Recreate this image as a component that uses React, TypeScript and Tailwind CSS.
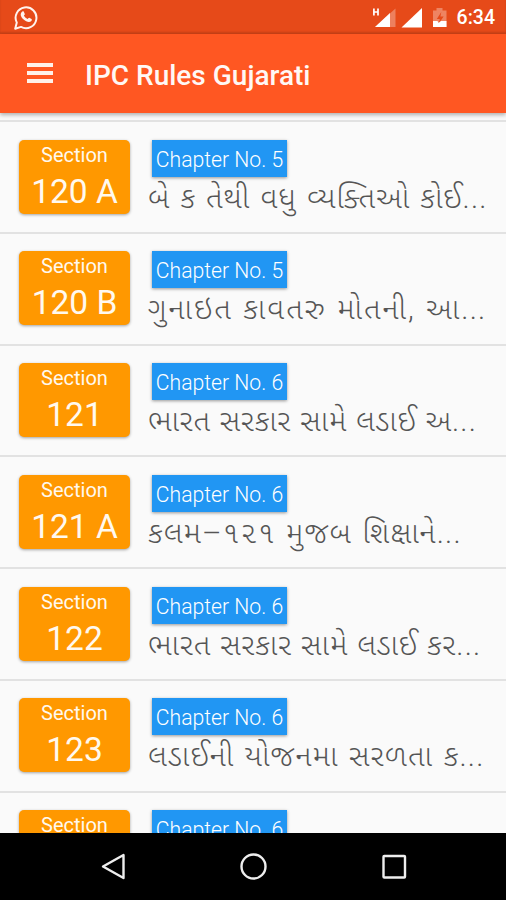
import React from "react";

interface Rule {
  section: string;
  chapter: number;
  title: string;
  spacing: string;
}

const RULES: Rule[] = [
  { section: "120 A", chapter: 5, title: "બે ક તેથી વધુ વ્યક્તિઓ કોઈ", spacing: "tracking-[0.9px] [word-spacing:2px]" },
  { section: "120 B", chapter: 5, title: "ગુનાઇત કાવતરુ મોતની, આ", spacing: "tracking-[2px] [word-spacing:1px]" },
  { section: "121", chapter: 6, title: "ભારત સરકાર સામે લડાઈ અ", spacing: "tracking-[0.7px] [word-spacing:1px]" },
  { section: "121 A", chapter: 6, title: "કલમ–૧૨૧ મુજબ શિક્ષાને", spacing: "tracking-[1.1px] [word-spacing:2px]" },
  { section: "122", chapter: 6, title: "ભારત સરકાર સામે લડાઈ કર", spacing: "tracking-[0.8px] [word-spacing:1px]" },
  { section: "123", chapter: 6, title: "લડાઈની યોજનમા સરળતા ક", spacing: "tracking-[1.15px] [word-spacing:2px]" },
  { section: "124", chapter: 6, title: "", spacing: "tracking-normal" },
];

function StatusBar() {
  return (
    <div className="flex h-[34px] shrink-0 items-center justify-between bg-[#e64a19] shadow-[inset_0_-2px_2px_rgba(0,0,0,0.12)]">
      <svg className="ml-[14px] h-[25px] w-[24px]" viewBox="0 0 24 25" fill="none">
        <path
          d="M1.2 23.8 2.8 17.6A10.4 10.4 0 1 1 7 21.9Z"
          stroke="#fff3ee"
          strokeWidth="2"
          strokeLinejoin="round"
        />
        <path
          d="M8.3 6.6c.5-.5 1.2-.5 1.5.1l1 2.2c.2.5-.8 1.3-.9 1.7.6 1.4 2 2.8 3.6 3.4.5 0 1.2-1.3 1.8-1.2l2.2 1.1c.7.4.3 1.7-.4 2.3-1.3 1.1-3 1-5 0-2.6-1.3-4.6-3.3-5.3-5.6-.3-1.5.3-3.1 1.5-4Z"
          fill="#fff3ee"
        />
      </svg>
      <div className="flex items-center pr-[11px]">
        <svg className="h-[34px] w-[84px]" viewBox="0 0 84 34">
          <path d="M0.9 8.5v7M5 8.5v7M0.5 12H5" stroke="#fff" strokeWidth="1.7" />
          <path d="M2 27 22.5 8.5V27Z" fill="#fff" opacity="0.3" />
          <path d="M2 27 17 13V27Z" fill="#fff" />
          <path d="M28.5 27.5 49 8v19.5Z" fill="#fff" />
          <path d="M60 10.5h3.500V8h6v2.500H73.500V27H60Z" fill="#fff" opacity="0.32" />
          <path d="M68.300 12 63.800 19h3l-1 4.500 4.800-7h-3.200Z" fill="#e64a19" />
          <path d="M60 21h4.500l1 2 2.500-2h5.500v6H60Z" fill="#fff" />
        </svg>
        <span className="pt-[2px] text-[19.5px] font-medium leading-[34px] text-white">6:34</span>
      </div>
    </div>
  );
}

function AppBar() {
  return (
    <header className="relative z-10 flex h-[79px] shrink-0 items-center bg-[#ff5722] pl-[27px] shadow-[0_2px_4px_rgba(0,0,0,0.3)]">
      <button aria-label="Open menu" className="mb-[1px] flex w-[26px] flex-col gap-1">
        <span className="h-[4px] bg-[#fff1ea]" />
        <span className="h-[4px] bg-[#fff1ea]" />
        <span className="h-[4px] bg-[#fff1ea]" />
      </button>
      <h1 className="ml-[32px] whitespace-nowrap pt-[4px] text-[28px] font-medium leading-8 text-[#fff8f5]">
        IPC Rules Gujarati
      </h1>
    </header>
  );
}

function RuleRow({ rule }: { rule: Rule }) {
  return (
    <li className="flex h-[111.8px] shrink-0 items-start border-t-2 border-[#e2e2e2] pl-[19px] pt-[17.5px]">
      <div className="h-[74px] w-[111px] shrink-0 rounded-[5px] bg-[#ff9800] text-center text-[#fff9ef] shadow-[0_1px_3px_rgba(0,0,0,0.35)]">
        <div className="pt-[3px] text-[20px] leading-6">Section</div>
        <div className="text-[33.5px] leading-[49px]">{rule.section}</div>
      </div>
      <div className="ml-[18px] min-w-0">
        <div className="ml-1 h-[37px] w-[135px] whitespace-nowrap bg-[#2196f3] text-center text-[21.2px] font-light leading-[40px] text-white shadow-[0_1px_3px_rgba(0,0,0,0.4)]">
          Chapter No. {rule.chapter}
        </div>
        <div className="flex whitespace-nowrap text-[30px] font-light leading-[42px] text-[#555]">
          <span className={rule.spacing}>{rule.title}</span>
          {rule.title && <span className="tracking-[1.2px]">...</span>}
        </div>
      </div>
    </li>
  );
}

function NavBar() {
  return (
    <nav className="flex h-[67px] shrink-0 items-center bg-black">
      <svg className="h-[67px] w-full" viewBox="0 0 506 67" fill="none" stroke="#eee" strokeWidth="2.4">
        <path d="M103 33.5 123.5 22v23Z" strokeLinejoin="round" />
        <circle cx="253.5" cy="33.5" r="12" />
        <rect x="383.5" y="23" width="21.5" height="21.5" rx="0.8" />
      </svg>
    </nav>
  );
}

export default function App() {
  return (
    <div className="flex h-[900px] w-[506px] flex-col overflow-hidden bg-[#fafafa] font-['Roboto','Noto_Sans_Gujarati','Noto_Sans',sans-serif]">
      <StatusBar />
      <AppBar />
      <ul className="flex min-h-0 flex-1 flex-col overflow-hidden pt-[7px]">
        {RULES.map((rule) => (
          <RuleRow key={rule.section} rule={rule} />
        ))}
      </ul>
      <NavBar />
    </div>
  );
}
